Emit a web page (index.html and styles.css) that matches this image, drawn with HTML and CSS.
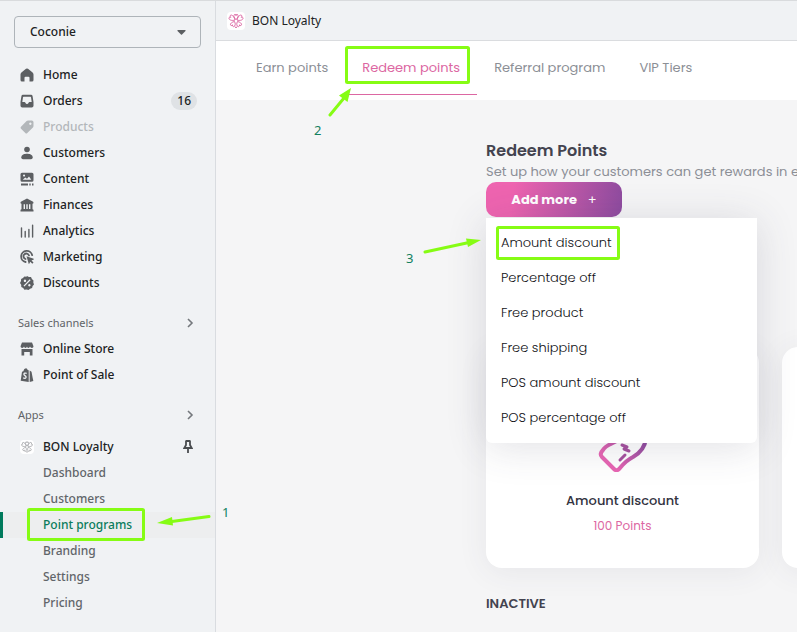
FILE: index.html
```html
<!DOCTYPE html>
<html lang="en">
<head>
    <meta charset="UTF-8">
    <title>BON Loyalty</title>
    <link rel="stylesheet" href="styles.css">
</head>
<body>
<div class="app">
    <aside class="sidebar">
        <select class="store" aria-label="Store">
            <option>Coconie</option>
        </select>
        <nav class="nav">
            <a href="#"><svg class="icon" viewBox="0 0 14 14"><path d="M6 .8a1.6 1.6 0 0 1 2 0l4.6 3.7q.9.8.9 2V12q0 1.5-1.5 1.5H9.5V9.700q0-1-1-1h-3q-1 0-1 1v3.800H2Q.5 13.500.5 12V6.500q0-1.200.9-2z"/></svg>Home</a>
            <a href="#"><svg class="icon" viewBox="0 0 14 14"><path fill-rule="evenodd" d="M3 .8h8q1.400 0 1.600 1.400L13.500 8v3.700q0 1.800-1.800 1.800H2.300Q.5 13.500.5 11.700V8l.9-5.800Q1.600.8 3 .8zm.5 2q-.4 0-.5.5L2.300 8h2.200q.7 0 .9.700.5 1.300 1.600 1.300t1.600-1.300Q8.800 8 9.500 8h2.200L11 3.300q-.1-.5-.5-.5z"/></svg>Orders<span class="badge">16</span></a>
            <a href="#" class="muted"><svg class="icon" viewBox="0 0 14 14"><path fill-rule="evenodd" d="M8 .5h3.800q1.700 0 1.700 1.700V6q0 .8-.6 1.400L7.300 13q-1 1-2 0L1 8.700q-1-1 0-2L6.600 1.100Q7.200.5 8 .5zm2.300 2a1.200 1.200 0 1 0 .1 0z"/></svg>Products</a>
            <a href="#"><svg class="icon" viewBox="0 0 14 14"><circle cx="7" cy="3.500" r="2.800"/><path d="M1.300 11.200C1.500 8.500 4.500 7.800 7 7.800s5.500.7 5.700 3.400q0 2-1.700 2H3q-1.700 0-1.700-2z"/></svg>Customers</a>
            <a href="#"><svg class="icon" viewBox="0 0 14 14"><path fill-rule="evenodd" d="M2 .8h10q1.500 0 1.500 1.500v6q0 1.500-1.500 1.500H2Q.5 9.800.5 8.300v-6Q.5.8 2 .8zm.7 7h8.600L9 4.500 7 6.800 5.300 5.400zM4 2.400a1 1 0 1 0 .1 0z"/><path d="M1 11.600h7v1.800H1zM9.300 11.600h1.400v1.800H9.300zM12 11.600h1.500v1.800H12z"/></svg>Content</a>
            <a href="#"><svg class="icon" viewBox="0 0 14 14"><path fill-rule="evenodd" d="M7 .5l5.700 3q.8.5.8 1.300 0 .9-1 .9v5.600q1 0 1 1v1.200H.5v-1.200q0-1 1-1V5.700q-1 0-1-.9 0-.8.8-1.300zM3.600 6.300v4.700H5V6.300zm2.700 0v4.700h1.400V6.300zm2.700 0v4.700h1.400V6.300z"/></svg>Finances</a>
            <a href="#"><svg class="icon line" viewBox="0 0 14 14"><path d="M1.500 4v9M5.200 7.500V13M8.900 5.500V13M12.600 1.200V13"/></svg>Analytics</a>
            <a href="#"><svg class="icon" viewBox="0 0 14 14"><path class="ring" d="M12.200 5.200A5.600 5.600 0 1 0 5.600 12M9 5.500A2.800 2.800 0 1 0 5.500 9"/><path d="M6.500 6.200l7.200 2.600q.5.3 0 .6l-2.200 1.100 2 2-1.200 1.200-2-2-1.100 2.100q-.3.500-.5 0z"/></svg>Marketing</a>
            <a href="#"><svg class="icon" viewBox="0 0 14 14"><path fill-rule="evenodd" d="M7 0l1.900 1 2.100.1.900 1.900L13.500 4.400 13.300 6.500 14 8.500l-1.400 1.600-.5 2-2 .6L8.500 14 6.500 13.500l-2.100.2-1.200-1.800L1.300 10.900l-.1-2.100L0 7l1-1.900.1-2.100 1.900-.9L4.400.5l2 .3zM9.700 3.300L3.500 9.700l.9.900 6.200-6.400zM4.900 3.600a1.200 1.200 0 1 0 .1 0zM9.300 8a1.200 1.200 0 1 0 .1 0z"/></svg>Discounts</a>
        </nav>
        <a href="#" class="section">Sales channels<svg class="chevron" viewBox="0 0 8 10"><path d="M2 1l4 4-4 4"/></svg></a>
        <nav class="nav">
            <a href="#"><svg class="icon" viewBox="0 0 14 14"><path d="M2 .5h10l1.500 3.800q0 1.700-1.600 1.700T10 4.600Q9.700 6 8.400 6T7 4.600Q6.800 6 5.500 6T4 4.600Q3.800 6 2.200 6T.5 4.300z"/><path d="M1.500 7h11v6.500H9.800V10H4.200v3.500H1.500z"/></svg>Online Store</a>
            <a href="#"><svg class="icon" viewBox="0 0 14 14"><path d="M2 3.700l1.300-.4Q4 .5 6 .3q1.200 0 1.700 1.800l1 .2V14L.7 12.700z"/><path d="M9.700 2.500l1.800 1.200 1.800 9.300-3.600 1z"/><path class="cut" d="M6.700 5.300Q4 4.600 3.900 6.300c0 1.500 2.300 1.200 2.200 2.900Q5.700 11 3.200 9.900"/></svg>Point of Sale</a>
        </nav>
        <a href="#" class="section">Apps<svg class="chevron" viewBox="0 0 8 10"><path d="M2 1l4 4-4 4"/></svg></a>
        <nav class="nav apps">
            <a href="#"><svg class="logo gray" viewBox="0 0 18 18"><use href="#flower"/></svg>BON Loyalty<svg class="pin" viewBox="0 0 10 14"><path d="M2.500 1h5M3 1v4L1.300 8h7.400L7 5V1M5 8v5"/></svg></a>
            <a href="#" class="sub">Dashboard</a>
            <a href="#" class="sub">Customers</a>
            <a href="#" class="sub current">Point programs</a>
            <a href="#" class="sub">Branding</a>
            <a href="#" class="sub">Settings</a>
            <a href="#" class="sub">Pricing</a>
        </nav>
    </aside>
    <div class="page">
        <header class="topbar">
            <svg class="logo" viewBox="0 0 18 18">
                <g id="flower">
                    <path d="M9 7.500C6.500 6 6.300 2.500 8 2.300q1 0 1 1.400 0-1.400 1-1.400C11.700 2.500 11.500 6 9 7.500z"/>
                    <path d="M8 8C7.300 4.500 4.500 2 3.300 3.500q-.6.900.5 1.800-1.400-.5-1.800.6C1.500 7.800 5 9.200 8 8z"/>
                    <path d="M10 8c.7-3.500 3.500-6 4.700-4.500q.6.900-.5 1.800 1.400-.5 1.800.6c.5 1.900-3 3.300-6 2.100z"/>
                    <path d="M7.500 9.500c-3 .5-5 2.800-3.600 3.900q.9.500 1.700-.5-.5 1.300.7 1.700C8 15 9 12 7.500 9.500z"/>
                    <path d="M10.500 9.500c3 .5 5 2.800 3.600 3.900q-.9.500-1.700-.5.500 1.300-.7 1.700C10 15 9 12 10.500 9.500z"/>
                    <path d="M8 14.500l1 1.500 1-1.500"/>
                </g>
            </svg>
            <span>BON Loyalty</span>
        </header>
        <nav class="tabs">
            <a href="#">Earn points</a>
            <a href="#" class="active">Redeem points</a>
            <a href="#">Referral program</a>
            <a href="#">VIP Tiers</a>
        </nav>
        <main class="content">
            <h1>Redeem Points</h1>
            <p class="intro">Set up how your customers can get rewards in exchange for points</p>
            <div class="dropdown">
                <button type="button" class="add">Add more <span class="plus">+</span></button>
                <ul class="menu">
                    <li><a href="#">Amount discount</a></li>
                    <li><a href="#">Percentage off</a></li>
                    <li><a href="#">Free product</a></li>
                    <li><a href="#">Free shipping</a></li>
                    <li><a href="#">POS amount discount</a></li>
                    <li><a href="#">POS percentage off</a></li>
                </ul>
            </div>
            <div class="cards">
                <article class="card">
                    <svg class="reward" viewBox="0 0 56 56">
                        <defs>
                            <linearGradient id="pink" x1="0" y1="1" x2="1" y2="0">
                                <stop offset="0.200" stop-color="#e765b3"/>
                                <stop offset="0.800" stop-color="#8a4a9e"/>
                            </linearGradient>
                        </defs>
                        <path d="M51 6V22C50 32 45 37 38 41C32 44 29 47 25 52Q22 56 19 53L7 41Q4 38 8 34C12 27 19 29 27 21L32 6z"/>
                        <path class="sign" d="M27 29l5 2-3 2 5 2M25 44l5-5"/>
                    </svg>
                    <h2>Amount discount</h2>
                    <p>100 Points</p>
                </article>
                <article class="card"></article>
            </div>
            <h3>INACTIVE</h3>
        </main>
    </div>
    <svg class="guide" width="640" height="560" viewBox="0 0 640 560">
        <rect x="28.500" y="509.500" width="115" height="30" rx="1"/>
        <rect x="346.500" y="47.500" width="122" height="35" rx="1"/>
        <rect x="497.500" y="227.500" width="121" height="31" rx="1"/>
        <path d="M209 516.500L168 522M330 115L344 98M425 252L469 242.500"/>
        <path class="head" d="M157 523l15-6 1 8.500zM351 88l-3.500 14-8.500-6.500zM481 240l-13 7-2-8.500z"/>
        <text x="222" y="517">1</text>
        <text x="314" y="135">2</text>
        <text x="406" y="263">3</text>
    </svg>
</div>
</body>
</html>
```

FILE: styles.css
```css
* {
    box-sizing: border-box;
}
body {
    margin: 0;
    font: 12px/26px "Noto Sans", sans-serif;
    color: #202223;
    background: #f5f5f6;
}
a {
    color: inherit;
    text-decoration: none;
}
.app {
    position: relative;
    display: flex;
    min-height: 100vh;
    border-top: 1px solid #d9dbdd;
    overflow: hidden;
}

/* sidebar */
.sidebar {
    flex: none;
    width: 216px;
    padding-top: 15px;
    background: #f0f2f4;
    border-right: 1px solid #d9dce0;
}
.store {
    display: block;
    width: 187px;
    height: 32px;
    margin: 0 14px 14px;
    padding: 0 15px;
    appearance: none;
    font: inherit;
    font-weight: 500;
    color: inherit;
    background: url("data:image/svg+xml,%3Csvg xmlns='http://www.w3.org/2000/svg' width='9' height='5'%3E%3Cpath d='M1 0h7q1 0 .5 1L5 4.500q-.5.500-1 0L.5 1Q0 0 1 0z' fill='%235c5f62'/%3E%3C/svg%3E") no-repeat right 14px center;
    border: 1px solid #aeb4b9;
    border-radius: 4px;
}
.nav a {
    display: flex;
    align-items: center;
    height: 26px;
    padding: 0 18px 0 20px;
    font-weight: 500;
}
.icon {
    width: 14px;
    height: 14px;
    margin-right: 9px;
    fill: #5c5f62;
}
.line,
.ring {
    fill: none;
    stroke: #5c5f62;
    stroke-width: 1.8;
    stroke-linecap: round;
}
.line {
    stroke-width: 1.4;
}
.cut {
    fill: none;
    stroke: #f0f2f4;
    stroke-width: 1.3;
}
.nav .muted {
    color: #b3b7ba;
}
.muted .icon {
    fill: #b3b7ba;
}
.badge {
    margin-left: auto;
    padding: 0 6px;
    line-height: 18px;
    background: #dfe2e5;
    border-radius: 9px;
}
.section {
    display: flex;
    align-items: center;
    justify-content: space-between;
    margin-top: 14px;
    padding: 0 21px 0 18px;
    font-size: 11px;
    color: #5f6367;
}
.chevron {
    width: 8px;
    height: 10px;
    fill: none;
    stroke: #74787c;
    stroke-width: 1.6;
}
.apps {
    margin-top: 6px;
}
.pin {
    width: 10px;
    height: 14px;
    margin: 0 4px 0 auto;
    fill: none;
    stroke: #4a4d50;
    stroke-width: 1.8;
}
.nav .sub {
    padding-left: 43px;
    color: #616569;
}
.nav .current {
    color: #0a7c5c;
    background: #edeeef;
    border-left: 3px solid #007a5c;
    padding-left: 40px;
}
.logo {
    width: 18px;
    height: 18px;
    background: #fff;
    border-radius: 4px;
    fill: none;
    stroke: #dc6ca6;
}
.gray {
    width: 14px;
    height: 14px;
    margin-right: 9px;
    stroke: #a2a4a6;
}

/* page */
.page {
    flex: 1;
    min-width: 0;
}
.topbar {
    display: flex;
    align-items: center;
    gap: 7px;
    height: 40px;
    padding-left: 11px;
    background: #f0f2f4;
    border-bottom: 1px solid #dadcdf;
}
.tabs,
.content {
    font-family: Poppins, Inter, sans-serif;
    font-size: 13px;
}
.tabs {
    display: flex;
    padding: 0 23px 5px;
    color: #8c8f96;
    background: #fff;
}
.tabs a {
    padding: 0 17px;
    line-height: 53px;
    white-space: nowrap;
    border-bottom: 1px solid transparent;
}
.tabs .active {
    color: #dc67a2;
    border-color: #dc67a2;
}
.content {
    padding: 40px 0 0 270px;
}
h1,
h2,
h3,
p {
    margin: 0;
}
h1 {
    font-size: 16px;
    line-height: 21px;
    font-weight: 600;
    color: #43434f;
}
.intro {
    line-height: 21px;
    white-space: nowrap;
    color: #8c8f96;
}
.dropdown {
    position: relative;
}
.add {
    display: block;
    width: 136px;
    height: 35px;
    padding: 0;
    font: inherit;
    font-weight: 700;
    color: #fff;
    background: linear-gradient(100deg, #ee64b0 20%, #8d4b9f);
    border: 0;
    border-radius: 10px;
}
.plus {
    margin-left: 8px;
    font-weight: 400;
}
.menu {
    position: absolute;
    top: 36px;
    left: 0;
    width: 271px;
    margin: 0;
    padding: 7px 0 8px;
    list-style: none;
    background: #fff;
    border-radius: 0 0 6px 6px;
    box-shadow: 0 4px 40px rgba(60, 60, 90, 0.16);
}
.menu a {
    display: block;
    padding-left: 15px;
    line-height: 35px;
    font-weight: 300;
    color: #111116;
}
.cards {
    display: flex;
    gap: 23px;
    margin-top: 130px;
}
.card {
    flex: none;
    width: 273px;
    padding: 69px 0 30px;
    text-align: center;
    background: #fff;
    border-radius: 16px;
    box-shadow: 0 4px 30px rgba(60, 60, 90, 0.08);
}
.reward {
    display: block;
    width: 56px;
    height: 56px;
    margin: 0 auto 16px;
    fill: none;
    stroke: url(#pink);
    stroke-width: 4;
    stroke-linejoin: round;
    stroke-linecap: round;
}
.sign {
    stroke: #a6519f;
    stroke-width: 3;
}
.card h2 {
    font-size: 13px;
    line-height: 25px;
    font-weight: 500;
    color: #33333f;
}
.card p {
    font-size: 12px;
    line-height: 25px;
    color: #dc67a2;
}
h3 {
    margin-top: 23px;
    font-size: 13px;
    font-weight: 600;
    color: #43434f;
}

/* walkthrough marks, drawn over the page */
.guide {
    position: absolute;
    top: -1px;
    left: 0;
    pointer-events: none;
    fill: none;
    stroke: #86fc14;
    stroke-width: 3;
    stroke-linecap: round;
}
.guide .head {
    fill: #86fc14;
    stroke: none;
}
.guide text {
    font-size: 13px;
    fill: #12805f;
    stroke: none;
}
```
